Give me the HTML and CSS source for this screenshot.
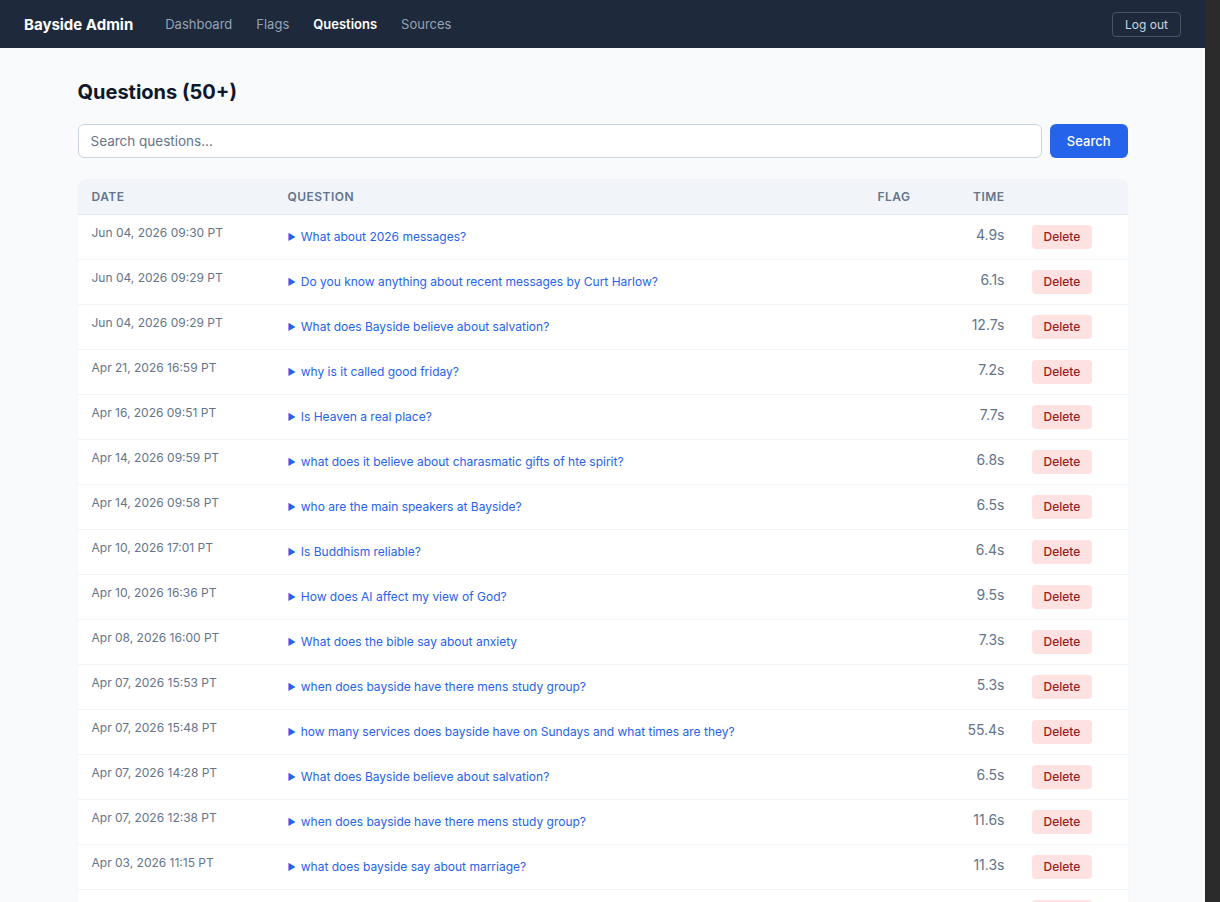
FILE: index.html
```html
<!doctype html>
<html lang="en">
<head>
  <meta charset="UTF-8">
  <meta name="viewport" content="width=device-width, initial-scale=1.0">
  <title>Questions - Bayside Admin</title>
  <link rel="stylesheet" href="styles.css">
</head>
<body>
<header class="topbar">
  <div class="topbar-left">
    <span class="brand">Bayside Admin</span>
    <nav class="nav">
      <a href="#">Dashboard</a>
      <a href="#">Flags</a>
      <a href="#" class="active">Questions</a>
      <a href="#">Sources</a>
    </nav>
  </div>
  <button class="logout">Log out</button>
</header>

<main class="page">
  <h1 class="page-title">Questions (50+)</h1>
  <form class="search">
    <input type="text" class="search-input" placeholder="Search questions...">
    <button type="button" class="search-btn">Search</button>
  </form>

  <table class="q-table">
    <colgroup>
      <col class="col-date">
      <col>
      <col class="col-flag">
      <col class="col-time">
      <col class="col-action">
    </colgroup>
    <thead>
    <tr>
      <th>Date</th>
      <th>Question</th>
      <th>Flag</th>
      <th class="num">Time</th>
      <th></th>
    </tr>
    </thead>
    <tbody>
    <tr>
      <td class="date">Jun 04, 2026 09:30 PT</td>
      <td class="question"><span class="caret">&#9654;</span>What about 2026 messages?</td>
      <td></td>
      <td class="num">4.9s</td>
      <td><button class="delete">Delete</button></td>
    </tr>
    <tr>
      <td class="date">Jun 04, 2026 09:29 PT</td>
      <td class="question"><span class="caret">&#9654;</span>Do you know anything about recent messages by Curt Harlow?</td>
      <td></td>
      <td class="num">6.1s</td>
      <td><button class="delete">Delete</button></td>
    </tr>
    <tr>
      <td class="date">Jun 04, 2026 09:29 PT</td>
      <td class="question"><span class="caret">&#9654;</span>What does Bayside believe about salvation?</td>
      <td></td>
      <td class="num">12.7s</td>
      <td><button class="delete">Delete</button></td>
    </tr>
    <tr>
      <td class="date">Apr 21, 2026 16:59 PT</td>
      <td class="question"><span class="caret">&#9654;</span>why is it called good friday?</td>
      <td></td>
      <td class="num">7.2s</td>
      <td><button class="delete">Delete</button></td>
    </tr>
    <tr>
      <td class="date">Apr 16, 2026 09:51 PT</td>
      <td class="question"><span class="caret">&#9654;</span>Is Heaven a real place?</td>
      <td></td>
      <td class="num">7.7s</td>
      <td><button class="delete">Delete</button></td>
    </tr>
    <tr>
      <td class="date">Apr 14, 2026 09:59 PT</td>
      <td class="question"><span class="caret">&#9654;</span>what does it believe about charasmatic gifts of hte spirit?</td>
      <td></td>
      <td class="num">6.8s</td>
      <td><button class="delete">Delete</button></td>
    </tr>
    <tr>
      <td class="date">Apr 14, 2026 09:58 PT</td>
      <td class="question"><span class="caret">&#9654;</span>who are the main speakers at Bayside?</td>
      <td></td>
      <td class="num">6.5s</td>
      <td><button class="delete">Delete</button></td>
    </tr>
    <tr>
      <td class="date">Apr 10, 2026 17:01 PT</td>
      <td class="question"><span class="caret">&#9654;</span>Is Buddhism reliable?</td>
      <td></td>
      <td class="num">6.4s</td>
      <td><button class="delete">Delete</button></td>
    </tr>
    <tr>
      <td class="date">Apr 10, 2026 16:36 PT</td>
      <td class="question"><span class="caret">&#9654;</span>How does AI affect my view of God?</td>
      <td></td>
      <td class="num">9.5s</td>
      <td><button class="delete">Delete</button></td>
    </tr>
    <tr>
      <td class="date">Apr 08, 2026 16:00 PT</td>
      <td class="question"><span class="caret">&#9654;</span>What does the bible say about anxiety</td>
      <td></td>
      <td class="num">7.3s</td>
      <td><button class="delete">Delete</button></td>
    </tr>
    <tr>
      <td class="date">Apr 07, 2026 15:53 PT</td>
      <td class="question"><span class="caret">&#9654;</span>when does bayside have there mens study group?</td>
      <td></td>
      <td class="num">5.3s</td>
      <td><button class="delete">Delete</button></td>
    </tr>
    <tr>
      <td class="date">Apr 07, 2026 15:48 PT</td>
      <td class="question"><span class="caret">&#9654;</span>how many services does bayside have on Sundays and what times are they?</td>
      <td></td>
      <td class="num">55.4s</td>
      <td><button class="delete">Delete</button></td>
    </tr>
    <tr>
      <td class="date">Apr 07, 2026 14:28 PT</td>
      <td class="question"><span class="caret">&#9654;</span>What does Bayside believe about salvation?</td>
      <td></td>
      <td class="num">6.5s</td>
      <td><button class="delete">Delete</button></td>
    </tr>
    <tr>
      <td class="date">Apr 07, 2026 12:38 PT</td>
      <td class="question"><span class="caret">&#9654;</span>when does bayside have there mens study group?</td>
      <td></td>
      <td class="num">11.6s</td>
      <td><button class="delete">Delete</button></td>
    </tr>
    <tr>
      <td class="date">Apr 03, 2026 11:15 PT</td>
      <td class="question"><span class="caret">&#9654;</span>what does bayside say about marriage?</td>
      <td></td>
      <td class="num">11.3s</td>
      <td><button class="delete">Delete</button></td>
    </tr>
    <tr>
      <td class="date">Apr 02, 2026 19:42 PT</td>
      <td class="question"><span class="caret">&#9654;</span>What time is the Saturday service?</td>
      <td></td>
      <td class="num">5.8s</td>
      <td><button class="delete">Delete</button></td>
    </tr>
    <tr>
      <td class="date">Apr 01, 2026 08:17 PT</td>
      <td class="question"><span class="caret">&#9654;</span>Where is the Granite Bay campus?</td>
      <td></td>
      <td class="num">4.2s</td>
      <td><button class="delete">Delete</button></td>
    </tr>
    <tr>
      <td class="date">Mar 30, 2026 21:05 PT</td>
      <td class="question"><span class="caret">&#9654;</span>Does Bayside offer baptism classes?</td>
      <td></td>
      <td class="num">6.0s</td>
      <td><button class="delete">Delete</button></td>
    </tr>
    </tbody>
  </table>
</main>
</body>
</html>
```

FILE: styles.css
```css
html {
  background: #2b2b2b;
}

body {
  margin: 0 15px 0 0;
  background: #f8fafc;
  color: #1e293b;
  font-family: Inter, "Noto Sans", "Liberation Sans", sans-serif;
}

.topbar {
  height: 48px;
  padding: 0 24px;
  background: #1e293b;
  display: flex;
  align-items: center;
  justify-content: space-between;
}

.topbar-left {
  display: flex;
  align-items: center;
  gap: 32px;
}

.brand {
  color: #fff;
  font-size: 15px;
  font-weight: 700;
}

.nav {
  display: flex;
  gap: 24px;
}

.nav a {
  color: #94a3b8;
  font-size: 13px;
  text-decoration: none;
}

.nav a.active {
  color: #fff;
  font-weight: 600;
}

.logout {
  background: transparent;
  border: 1px solid #475569;
  border-radius: 4px;
  color: #cbd5e1;
  font-family: inherit;
  font-size: 12px;
  line-height: 15px;
  padding: 4px 12px;
}

.page {
  max-width: 1050px;
  margin: 0 auto;
  padding: 30px 0 40px;
}

.page-title {
  margin: 0 0 18px;
  font-size: 20px;
  line-height: 28px;
  font-weight: 700;
  color: #0f172a;
}

.search {
  display: flex;
  gap: 8px;
  margin-bottom: 21px;
}

.search-input {
  flex: 1;
  height: 34px;
  box-sizing: border-box;
  padding: 0 12px;
  background: #fff;
  color: #1e293b;
  border: 1px solid #cbd5e1;
  border-radius: 6px;
  font-family: inherit;
  font-size: 13.5px;
}

.search-input::placeholder {
  color: #64748b;
}

.search-btn {
  height: 34px;
  padding: 0 17px;
  background: #2563eb;
  color: #fff;
  border: none;
  border-radius: 6px;
  font-family: inherit;
  font-size: 13px;
  font-weight: 500;
}

.q-table {
  width: 100%;
  table-layout: fixed;
  border-collapse: collapse;
  background: #fff;
  border-radius: 8px;
  overflow: hidden;
  box-shadow: 0 1px 2px rgba(15, 23, 42, 0.04);
}

.col-date { width: 196px; }
.col-flag { width: 86px; }
.col-time { width: 68px; }
.col-action { width: 110px; }

.q-table th {
  background: #f1f5f9;
  color: #64748b;
  font-size: 12px;
  font-weight: 600;
  text-transform: uppercase;
  letter-spacing: 0.04em;
  text-align: left;
  padding: 10px 14px;
  line-height: 15px;
  border-bottom: 1px solid #e2e8f0;
}

.q-table td {
  padding: 10px 14px;
  vertical-align: top;
  border-bottom: 1px solid #f1f5f9;
  font-size: 12px;
  line-height: 15px;
}

.q-table .num {
  text-align: right;
  padding-right: 13px;
}

td.date {
  color: #64748b;
}

td.question {
  color: #2563eb;
  padding-top: 14px;
}

.caret {
  font-size: 9px;
  margin-right: 5px;
  vertical-align: 1px;
}

td.num {
  color: #64748b;
  font-size: 14px;
  padding-top: 12px;
}

.delete {
  background: #fee2e2;
  color: #991b1b;
  border: none;
  border-radius: 4px;
  padding: 3px 12px;
  font-family: inherit;
  font-size: 12px;
  line-height: 18px;
  font-weight: 500;
}
```
